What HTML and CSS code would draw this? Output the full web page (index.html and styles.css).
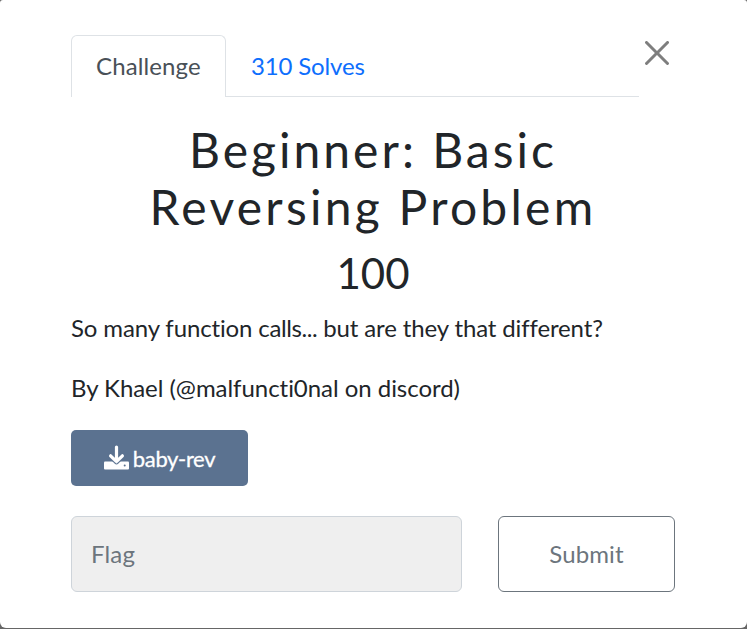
FILE: index.html
```html
<!DOCTYPE html>
<html lang="en">
<head>
<meta charset="utf-8">
<title>Challenge</title>
<link rel="stylesheet" href="styles.css">
</head>
<body>
<main class="modal">
  <header class="head">
    <nav class="tabs">
      <a class="tab active">Challenge</a>
      <a class="tab solves">310 Solves</a>
    </nav>
    <button class="close" aria-label="Close"><svg viewBox="0 0 16 16"><path d="M.293.293a1 1 0 0 1 1.414 0L8 6.586 14.293.293a1 1 0 1 1 1.414 1.414L9.414 8l6.293 6.293a1 1 0 0 1-1.414 1.414L8 9.414l-6.293 6.293a1 1 0 0 1-1.414-1.414L6.586 8 .293 1.707a1 1 0 0 1 0-1.414z"/></svg></button>
  </header>
  <h2 class="name"><span>Beginner: Basic</span><br><span class="second">Reversing Problem</span></h2>
  <h3 class="value">100</h3>
  <p class="desc intro">So many function <span class="calls">calls...</span> but are they that different?</p>
  <p class="desc author">By Khael (@malfuncti0nal on discord)</p>
  <a class="file"><svg viewBox="0 0 25 25"><rect x="0" y="16.500" width="25" height="8" rx="1"/><path class="arrow gap" d="M12.500 2V16.500M6.600 10.800l5.900 5.900 5.900-5.900"/><path class="arrow" d="M12.500 2V16.500M6.600 10.800l5.900 5.900 5.900-5.900"/><circle class="dot" cx="20.700" cy="20.500" r="1"/></svg><span>baby-rev</span></a>
  <form class="answer">
    <input class="flag" type="text" placeholder="Flag">
    <button class="submit" type="button">Submit</button>
  </form>
</main>
</body>
</html>
```
FILE: styles.css
```css
* { box-sizing: border-box; }
body { margin: 0; background: #666; font-family: Lato, sans-serif; font-size: 24px; line-height: 36px; color: #212529; font-variant-ligatures: none; }
.modal { height: 628px; padding: 35px 72px 0 71px; background: #fff; border-radius: 3px 3px 6px 6px; }
.head { display: flex; height: 62px; }
.tabs { display: flex; width: 568px; border-bottom: 1px solid #dee2e6; }
.tab { height: 62px; padding: 13px 25px; color: #0d6efd; }
.solves { letter-spacing: -.15px; }
.active { width: 155px; color: #495057; background: #fff; border: 1px solid #dee2e6; border-bottom: 0; border-radius: 6px 6px 0 0; padding: 12px 24px; letter-spacing: .12px; }
.close { margin: 6px 0 0 6px; padding: 0; width: 24px; height: 24px; border: 0; background: none; opacity: .5; }
.close svg { display: block; width: 24px; height: 24px; }
.name { margin: 24px 0 0; text-align: center; font-weight: 400; font-size: 48px; line-height: 57px; letter-spacing: 3px; }
.second { letter-spacing: 3.250px; }
.value { margin: 13px 0 12px; text-align: center; font-weight: 400; font-size: 42px; line-height: 50px; }
.desc { margin: 0 0 24px; }
.intro { letter-spacing: -.13px; }
.calls { letter-spacing: -.4px; }
.author { letter-spacing: -.04px; }
.file { display: flex; align-items: center; justify-content: center; width: 177px; height: 56px; margin-bottom: 30px; border-radius: 5px; background: #5b7290; color: #fff; gap: 4px; font-size: 22px; letter-spacing: -.35px; padding-top: 2px; -webkit-text-stroke: .3px #fff; }
.file svg { width: 25px; height: 25px; fill: #fff; margin-top: -3px; }
.arrow { fill: none; stroke: #fff; stroke-width: 3.200; stroke-linecap: round; stroke-linejoin: round; }
.gap { stroke: #5b7290; stroke-width: 5.400; }
.dot { fill: #5b7290; }
.answer { display: flex; gap: 36px; margin: 0; }
.flag { width: 391px; height: 76px; padding: 0 19px 1px; border: 1px solid #ced4da; border-radius: 6px; background: #efefef; font: inherit; letter-spacing: .15px; }
.flag::placeholder { color: #6c757d; opacity: 1; }
.submit { width: 177px; height: 76px; border: 1px solid #6c757d; border-radius: 6px; background: #fff; color: #6c757d; font: inherit; letter-spacing: .1px; }
```
